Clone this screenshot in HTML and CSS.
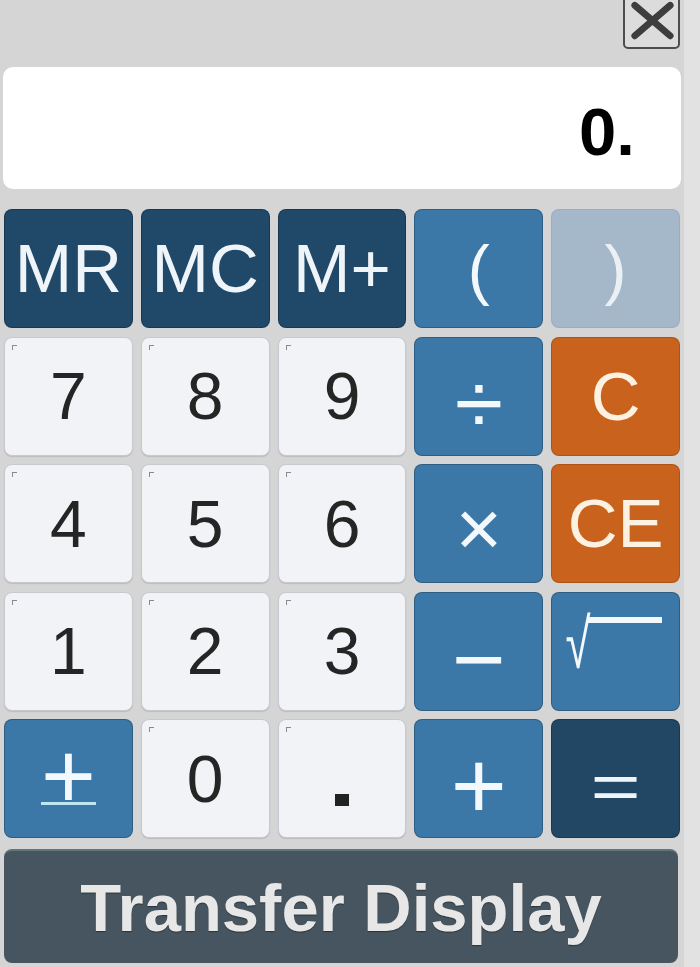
FILE: index.html
```html
<!DOCTYPE html>
<html>
<head>
<meta charset="utf-8">
<link rel="stylesheet" href="styles.css">
</head>
<body>
<div class="panel">
  <div class="topbar">
    <button class="close" aria-label="Close">
      <svg class="close-x" viewBox="0 0 54 47" width="54" height="47">
        <path d="M10 5 L46 36 M46 5 L10 36" stroke="#3d3d3d" stroke-width="7" stroke-linecap="round" fill="none"/>
      </svg>
    </button>
  </div>
  <div class="display">0.</div>
  <div class="keys">
    <button class="k navy lbl">MR</button>
    <button class="k navy lbl">MC</button>
    <button class="k navy lbl">M+</button>
    <button class="k blue">(</button>
    <button class="k pale">)</button>

    <button class="k d">7</button>
    <button class="k d">8</button>
    <button class="k d">9</button>
    <button class="k blue op div">÷</button>
    <button class="k orange lbl">C</button>

    <button class="k d">4</button>
    <button class="k d">5</button>
    <button class="k d">6</button>
    <button class="k blue op mul">×</button>
    <button class="k orange lbl">CE</button>

    <button class="k d">1</button>
    <button class="k d">2</button>
    <button class="k d">3</button>
    <button class="k blue op minus">−</button>
    <button class="k blue sqrt"><span class="rad">√</span><span class="vinc"></span></button>

    <button class="k blue op pm"><span class="pm-glyph">+</span></button>
    <button class="k d">0</button>
    <button class="k d"><span class="dot" aria-label="."></span></button>
    <button class="k blue op plus">+</button>
    <button class="k navy op eq"><span class="eq-glyph">=</span></button>
  </div>
  <button class="transfer">Transfer Display</button>
</div>
</body>
</html>
```
FILE: styles.css
```css
html, body {
  margin: 0;
  padding: 0;
}
body {
  background: #e2e2e2;
  font-family: "Liberation Sans", Arial, sans-serif;
  width: 700px;
  height: 967px;
  overflow: hidden;
}
.panel {
  width: 684px;
  height: 967px;
  box-sizing: border-box;
  padding: 0 4px;
  background: #d5d5d5;
  display: flex;
  flex-direction: column;
}
.topbar {
  height: 67px;
  display: flex;
  justify-content: flex-end;
  align-items: flex-start;
}
.close {
  width: 57px;
  height: 51px;
  margin-top: -2px;
  padding: 0;
  border: 2px solid #4d4d4d;
  border-radius: 0 0 5px 5px;
  background: #dcdcdc;
  display: flex;
  align-items: flex-start;
  justify-content: center;
}
.close-x {
  display: block;
}
.display {
  height: 122px;
  margin: 0 -1px;
  box-sizing: border-box;
  background: #ffffff;
  border-radius: 10px;
  display: flex;
  align-items: center;
  justify-content: flex-end;
  padding: 6px 46px 0 0;
  font-weight: bold;
  font-size: 67px;
  color: #000;
}
.keys {
  margin-top: 20px;
  display: grid;
  grid-template-columns: repeat(5, 1fr);
  grid-auto-rows: 119px;
  column-gap: 8px;
  row-gap: 8.5px;
}
.k {
  position: relative;
  margin: 0;
  padding: 0;
  border-radius: 8px;
  font-family: "Liberation Sans", Arial, sans-serif;
  font-size: 66px;
  display: flex;
  align-items: center;
  justify-content: center;
  border: 1px solid rgba(0, 0, 0, 0.22);
  overflow: hidden;
}
.lbl {
  font-size: 69px;
}
.navy {
  background: #1f4869;
  color: #eef4f8;
}
.blue {
  background: #3b78a7;
  color: #f2f8fb;
}
.pale {
  background: #a4b8c9;
  color: #eaf0f5;
  border-color: rgba(0, 0, 0, 0.06);
}
.orange {
  background: #c8621c;
  color: #fdf1e2;
  border-color: rgba(120, 50, 0, 0.3);
}
.d {
  background: #f1f3f6;
  color: #252525;
  border: 1px solid #c6cad0;
  box-shadow: 0 1px 1px rgba(0, 0, 0, 0.12);
}
.d::before {
  content: "";
  position: absolute;
  top: 7px;
  left: 7px;
  width: 4px;
  height: 4px;
  border-top: 1px solid #8a8a8a;
  border-left: 1px solid #8a8a8a;
}
.div {
  font-size: 88px;
  padding-top: 16px;
}
.mul {
  font-size: 80px;
  padding-top: 10px;
}
.minus {
  font-size: 92px;
  padding-top: 16px;
}
.plus {
  font-size: 96px;
  padding-top: 15px;
}
.eq {
  background: #214764;
  padding-top: 15px;
}
.eq-glyph {
  display: inline-block;
  font-size: 86px;
  transform: scaleY(0.75);
}
.pm-glyph {
  display: inline-block;
  font-size: 94px;
  line-height: 60px;
  height: 56px;
  margin-top: -6px;
  border-bottom: 3px solid #bfe6f4;
}
.sqrt {
  align-items: flex-start;
  justify-content: flex-start;
  padding-top: 20px;
}
.rad {
  display: inline-block;
  font-size: 70px;
  line-height: 1;
  margin-top: -4px;
  transform: scaleX(0.65);
  transform-origin: right center;
}
.vinc {
  display: block;
  width: 74px;
  height: 6px;
  background: #f2f8fb;
  margin-left: -3px;
  margin-top: 4px;
}
.dot {
  display: block;
  width: 14px;
  height: 12px;
  background: #222;
  margin-top: 42px;
}
.transfer {
  margin: 11px 2px 0 0;
  height: 114px;
  padding: 0;
  border: 0;
  border-top: 2px solid #5d777c;
  border-radius: 8px;
  background: #46555f;
  color: #e7e7e7;
  font-family: "Liberation Sans", Arial, sans-serif;
  font-weight: bold;
  font-size: 67px;
  text-shadow: 0 1px 1px rgba(0, 0, 0, 0.4);
}
```
